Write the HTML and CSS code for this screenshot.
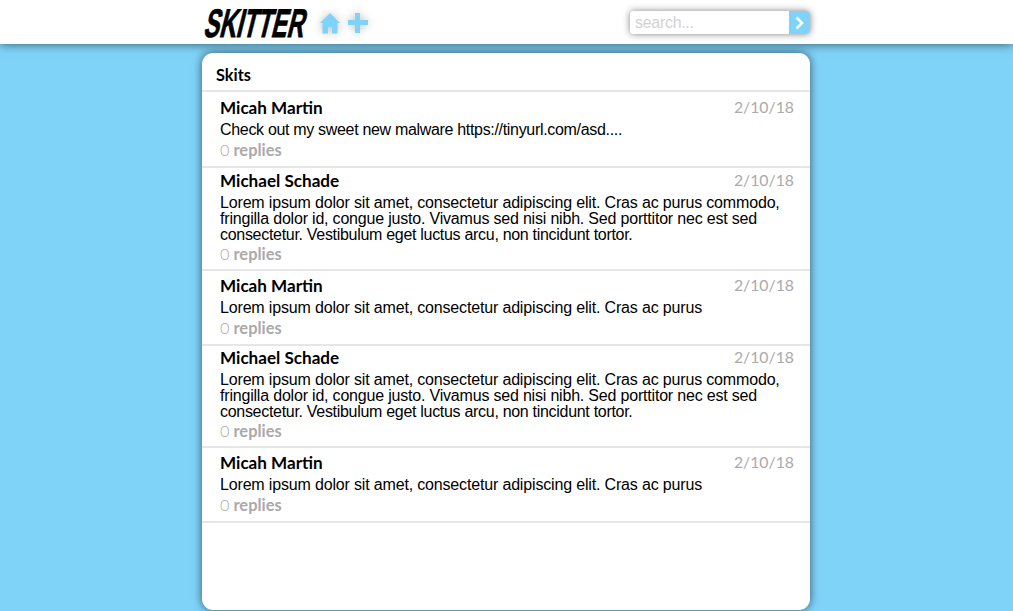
FILE: index.html
```
<!DOCTYPE html>
<html lang="en">
<head>
<meta charset="utf-8">
<title>Skitter</title>
<link rel="stylesheet" href="styles.css">
</head>
<body>
<header class="topbar">
  <div class="topbar-inner">
    <svg class="logo" width="112" height="44" viewBox="0 0 112 44" role="img" aria-label="Skitter">
      <text class="logo-text" transform="translate(0.800 36.500) skewX(-14)" x="0" y="0" textLength="100" lengthAdjust="spacingAndGlyphs">SKITTER</text>
    </svg>
    <svg class="icon home" width="22" height="22" viewBox="0 0 22 22"><path d="M11 1 21 11H18.500V21.500H13V15H9V21.500H3.500V11H1L11 1Z"/></svg>
    <svg class="icon plus" width="22" height="22" viewBox="0 0 22 22"><path d="M8 1H13V8H21V13H13V21H8V13H1V8H8Z"/></svg>
    <form class="search">
      <input class="search-input" type="text" placeholder="search...">
      <button class="search-button" type="button" aria-label="Search"><svg width="21" height="23" viewBox="0 0 21 23"><path d="M7.500 6.500 13 12 7.500 17.500"/></svg></button>
    </form>
  </div>
</header>
<main class="card">
  <h1 class="card-title">Skits</h1>
  <article class="skit short first">
    <div class="skit-head"><h2>Micah Martin</h2><time>2/10/18</time></div>
    <p><span class="line link-line">Check out my sweet new malware https://tinyurl.com/asd....</span></p>
    <div class="replies"><span>0</span> replies</div>
  </article>
  <article class="skit tall">
    <div class="skit-head"><h2>Michael Schade</h2><time>2/10/18</time></div>
    <p><span class="line">Lorem ipsum dolor sit amet, consectetur adipiscing elit. Cras ac purus commodo,</span><span class="line middle-line">fringilla dolor id, congue justo. Vivamus sed nisi nibh. Sed porttitor nec est sed</span><span class="line last-line">consectetur. Vestibulum eget luctus arcu, non tincidunt tortor.</span></p>
    <div class="replies"><span>0</span> replies</div>
  </article>
  <article class="skit short">
    <div class="skit-head"><h2>Micah Martin</h2><time>2/10/18</time></div>
    <p><span class="line">Lorem ipsum dolor sit amet, consectetur adipiscing elit. Cras ac purus</span></p>
    <div class="replies"><span>0</span> replies</div>
  </article>
  <article class="skit tall second">
    <div class="skit-head"><h2>Michael Schade</h2><time>2/10/18</time></div>
    <p><span class="line">Lorem ipsum dolor sit amet, consectetur adipiscing elit. Cras ac purus commodo,</span><span class="line middle-line">fringilla dolor id, congue justo. Vivamus sed nisi nibh. Sed porttitor nec est sed</span><span class="line last-line">consectetur. Vestibulum eget luctus arcu, non tincidunt tortor.</span></p>
    <div class="replies"><span>0</span> replies</div>
  </article>
  <article class="skit short">
    <div class="skit-head"><h2>Micah Martin</h2><time>2/10/18</time></div>
    <p><span class="line">Lorem ipsum dolor sit amet, consectetur adipiscing elit. Cras ac purus</span></p>
    <div class="replies"><span>0</span> replies</div>
  </article>
</main>
</body>
</html>
```
FILE: styles.css
```
* { box-sizing: border-box; }
body {
  margin: 0;
  height: 611px;
  overflow: hidden;
  background: #7fd3f9;
  font-family: "Liberation Sans", Arial, sans-serif;
  font-size: 16px;
  color: #000;
}
.topbar {
  height: 44px;
  background: #fff;
  box-shadow: 0 0 10px rgba(0, 0, 0, .6);
}
.topbar-inner {
  display: flex;
  align-items: center;
  width: 608px;
  height: 44px;
  margin-left: 202px;
}
.logo { flex: none; overflow: visible; }
.logo-text {
  font: bold 40px "Liberation Sans", Arial, sans-serif;
  stroke: #000;
  stroke-width: .9px;
}
.icon {
  overflow: visible;
  fill: #7fd3f9;
  filter: drop-shadow(0 0 4px rgba(0, 0, 0, .25));
}
.home { margin: 2px 0 0 5px; }
.plus { margin: 2px 0 0 6px; }
.search {
  display: flex;
  width: 180px;
  height: 23px;
  margin: 1px 0 0 auto;
  border-radius: 4px;
  overflow: hidden;
  box-shadow: 0 0 7px rgba(0, 0, 0, .5);
}
.search-input {
  width: 159px;
  padding: 0 5px;
  border: 0;
  font: 16px "Liberation Sans", Arial, sans-serif;
  letter-spacing: -.3px;
}
.search-input::placeholder { color: #d2d2d2; opacity: 1; }
.search-button {
  width: 21px;
  padding: 0;
  border: 0;
  background: #7fd3f9;
}
.search-button svg { display: block; }
.search-button path { fill: none; stroke: #fff; stroke-width: 2.5; }
.card {
  width: 608px;
  height: 557px;
  margin: 9px 0 0 202px;
  border-radius: 11px;
  background: #fff;
  box-shadow: 0 0 10px rgba(0, 0, 0, .6);
}
.card-title {
  height: 39px;
  margin: 0;
  padding: 12px 14px 0;
  border-bottom: 2px solid #e6e6e6;
  font: bold 16.3px/20px Lato, sans-serif;
}
.skit {
  padding: 4px 16px 0 18px;
  border-bottom: 2px solid #e6e6e6;
}
.short { height: 75px; }
.first { height: 76px; padding-top: 5px; }
.tall { height: 103px; padding-top: 2px; }
.second { height: 102px; padding-top: 1px; }
.skit-head {
  display: flex;
  justify-content: space-between;
  height: 20px;
}
.skit-head h2 {
  margin: 0;
  font: bold 17.1px/22px Lato, sans-serif;
}
.skit-head time {
  color: #aaa;
  font: 15.8px/20px Lato, sans-serif;
}
.skit p { margin: 5px 0 0; line-height: 16px; }
.line { display: block; white-space: nowrap; letter-spacing: -.165px; }
.link-line { letter-spacing: -.32px; }
.middle-line { letter-spacing: -.195px; }
.last-line { letter-spacing: -.3px; }
.replies {
  margin-top: 1px;
  color: #aaa;
  font: bold 16.4px/22px Lato, sans-serif;
}
.tall .replies { margin-top: 0; }
.replies span { font-weight: 300; }
```
